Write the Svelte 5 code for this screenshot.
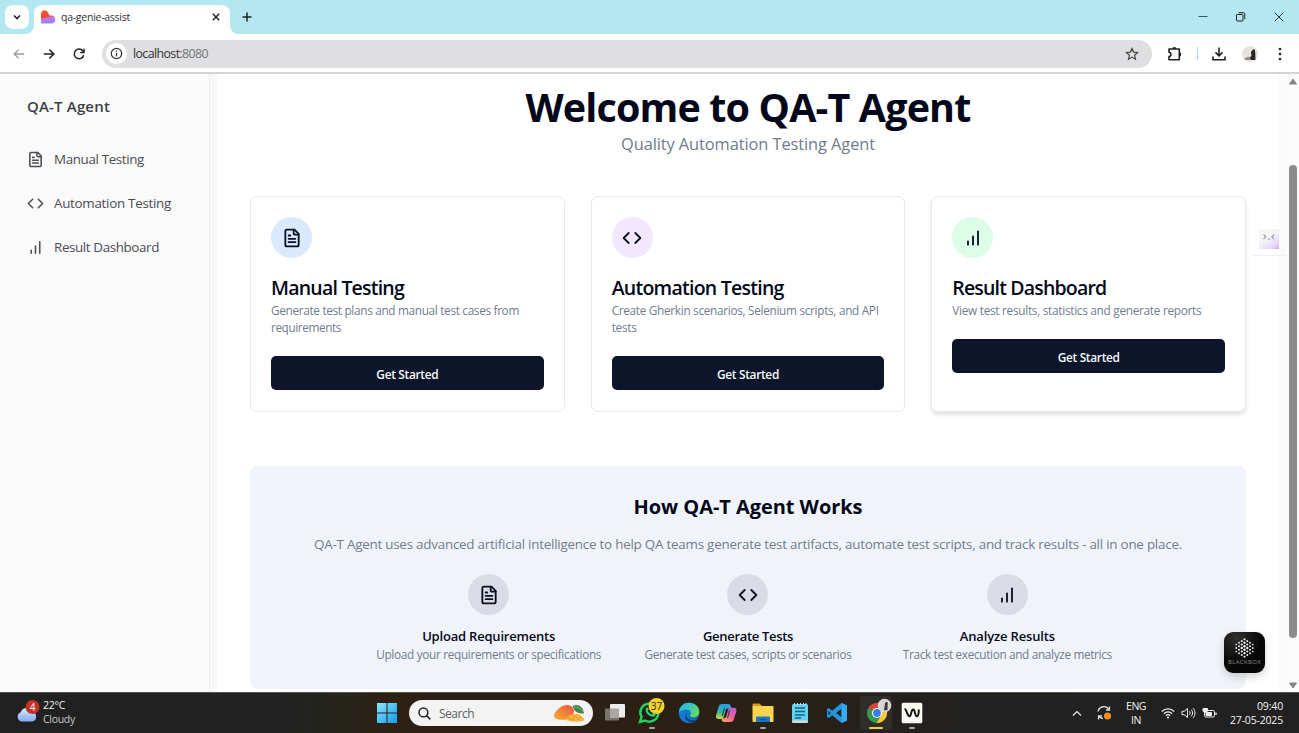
<script>
  const nav = [
    { icon: 'file', label: 'Manual Testing', w: 90 },
    { icon: 'code', label: 'Automation Testing', w: 117 },
    { icon: 'bars', label: 'Result Dashboard', w: 105 }
  ];
  const cards = [
    { icon: 'file', tint: 'blue', title: 'Manual Testing', w: 133, lines: [['Generate test plans and manual test cases from', 248], ['requirements', 70]] },
    { icon: 'code', tint: 'purple', title: 'Automation Testing', w: 172, lines: [['Create Gherkin scenarios, Selenium scripts, and API', 267], ['tests', 25]] },
    { icon: 'bars', tint: 'green', title: 'Result Dashboard', w: 154, lines: [['View test results, statistics and generate reports', 249]] }
  ];
  const steps = [
    { icon: 'file', title: 'Upload Requirements', w: 133, text: 'Upload your requirements or specifications', tw: 225 },
    { icon: 'code', title: 'Generate Tests', w: 90, text: 'Generate test cases, scripts or scenarios', tw: 207 },
    { icon: 'bars', title: 'Analyze Results', w: 95, text: 'Track test execution and analyze metrics', tw: 209 }
  ];
  const dots = [];
  for (let c = -3; c <= 3; c++) {
    const n = 6 - Math.abs(c);
    for (let r = 0; r < n; r++) {
      dots.push({ x: 20.5 + c * 2.75, y: 16 + (r - (n - 1) / 2) * 3.5, r: 1.3 - Math.abs(c) * 0.12 - Math.abs(r - (n - 1) / 2) * 0.1 });
    }
  }

  // Tracks a line of text so that it takes up the given width.
  function fit(node, width) {
    const apply = () => {
      node.style.letterSpacing = '0px';
      const natural = node.getBoundingClientRect().width;
      node.style.letterSpacing = (width - natural) / node.textContent.length + 'px';
    };
    apply();
    document.fonts?.ready.then(apply);
  }
</script>

{#snippet glyph(name, size)}
  <svg width={size} height={size} viewBox="0 0 24 24" fill="none" stroke="currentColor" stroke-width="2.2" stroke-linecap="round" stroke-linejoin="round">
    {#if name === 'file'}
      <path d="M15 2H6a2 2 0 0 0-2 2v16a2 2 0 0 0 2 2h12a2 2 0 0 0 2-2V7Z" /><path d="M14 2v4a2 2 0 0 0 2 2h4M10 9H8M16 13H8M16 17H8" />
    {:else if name === 'code'}
      <path d="m16 18 6-6-6-6M8 6l-6 6 6 6" />
    {:else}
      <path d="M12 20V10M18 20V4M6 20v-4" />
    {/if}
  </svg>
{/snippet}

<div class="screen">
  <header class="tabs">
    <div class="drop"><svg width="10" height="10" viewBox="0 0 10 10" fill="none" stroke="#222" stroke-width="1.6"><path d="M2 3.5 5 6.5 8 3.5" /></svg></div>
    <div class="tab">
      <svg width="14" height="14" viewBox="0 0 14 14">
        <defs><linearGradient id="heart" x1="0" y1="0" x2=".25" y2="1"><stop offset=".1" stop-color="#f7632a" /><stop offset=".5" stop-color="#f1423c" /><stop offset=".7" stop-color="#c77ae0" /><stop offset="1" stop-color="#8c86f8" /></linearGradient></defs>
        <path d="M0 4C0 1.500 1.500.2 3.500.2c1.700 0 2.700.8 3.600 2.500L8.500 5.500h1.700a3.900 3.900 0 0 1 0 8H1.200C.4 13.500 0 13 0 12.300Z" fill="url(#heart)" />
      </svg>
      <span class="tabname"><span class="t" use:fit={69}>qa-genie-assist</span></span>
      <svg class="close" width="8" height="8" viewBox="0 0 8 8" stroke="#222" stroke-width="1.5"><path d="m.8.8 6.4 6.4M7.2.8.8 7.2" /></svg>
    </div>
    <svg class="plus" width="10" height="10" viewBox="0 0 10 10" stroke="#222" stroke-width="1.5"><path d="M5 .5v9M.5 5h9" /></svg>
    <div class="win">
      <svg width="10" height="10" viewBox="0 0 10 10" stroke="#35565d"><path d="M.5 4.500h9" /></svg>
      <svg width="10" height="10" viewBox="0 0 10 10" fill="none" stroke="#222"><rect x=".5" y="2.500" width="6.500" height="6.500" rx=".8" /><path d="M2.500.7h5c.8 0 1.300.5 1.300 1.300V7" /></svg>
      <svg width="10" height="10" viewBox="0 0 10 10" stroke="#333"><path d="m.7.7 8.6 8.6M9.3.7.7 9.3" /></svg>
    </div>
  </header>

  <div class="toolbar">
    <svg width="12" height="12" viewBox="0 0 12 12" fill="none" stroke="#999" stroke-width="1.3"><path d="M11.2 6H1.3M5.6 1.6 1.2 6l4.4 4.4" /></svg>
    <svg width="12" height="12" viewBox="0 0 12 12" fill="none" stroke="#222" stroke-width="1.5"><path d="M.8 6h9.900M6.400 1.600 10.800 6l-4.400 4.400" /></svg>
    <svg width="12" height="12" viewBox="0 0 12 12" fill="none" stroke="#222" stroke-width="1.5"><path d="M10.700 7.200A4.800 4.800 0 1 1 9.900 3L10.800 4.200" /><path d="M11 .7v3.700H7.200" /></svg>
    <div class="omni">
      <div class="info"><svg width="13" height="13" viewBox="0 0 13 13" fill="none" stroke="#333" stroke-width="1.2"><circle cx="6.5" cy="6.5" r="5.2" /><path d="M6.500 5.800v3.600M6.500 3.400v1.400" /></svg></div>
      <span class="t url" use:fit={75}>localhost<span class="port">:8080</span></span>
      <svg class="star" width="14" height="14" viewBox="0 0 14 14" fill="none" stroke="#444" stroke-width="1.200"><path d="m7 1.400 1.600 3.700 4 .4-3 2.700.9 4L7 10.100l-3.500 2.100.9-4-3-2.700 4-.4Z" /></svg>
    </div>
    <svg class="puzzle" width="16" height="16" viewBox="0 0 16 16" fill="none" stroke="#222" stroke-width="1.600" stroke-linejoin="round"><path d="M2 3h10.300v10.700H2v-3.200c2.500-.2 2.500-4 0-4.200Z" /><path d="M6 2.600a1.500 1.500 0 0 1 2.600 0M12.600 7a1.500 1.500 0 0 1 0 2.700" fill="#222" /></svg>
    <i class="sep"></i>
    <svg class="down" width="14" height="14" viewBox="0 0 14 14" fill="none" stroke="#222" stroke-width="1.600"><path d="M7 .5v8.200M3.500 5.400 7 8.900l3.500-3.500M1 9.500v3.200h12V9.500" /></svg>
    <svg class="avatar" width="16" height="16" viewBox="0 0 16 16"><circle cx="8" cy="8" r="8" fill="#e8e3df" /><path d="M9 6.500c.6-2 2.300-3.500 3.700-3.100.6 2.400.9 6.500.7 10.600H8.800l-1-2.200 1.600-2Z" fill="#282527" /><path d="m2.500 13.500.7-1.500 4.200-1.500 1 3.500H4Z" fill="#8f8c8c" /></svg>
    <svg class="kebab" width="4" height="14" viewBox="0 0 4 14" fill="#222"><circle cx="2" cy="2" r="1.350" /><circle cx="2" cy="7" r="1.350" /><circle cx="2" cy="12" r="1.350" /></svg>
  </div>

  <div class="page">
    <aside>
      <div class="brand"><span class="t" use:fit={83}>QA-T Agent</span></div>
      {#each nav as n}
        <div class="nav">{@render glyph(n.icon, 17)}<span class="t" use:fit={n.w}>{n.label}</span></div>
      {/each}
    </aside>
    <div class="gutter"></div>
    <main>
      <h1><span class="t" use:fit={445}>Welcome to QA-T Agent</span></h1>
      <p class="sub"><span class="t" use:fit={254}>Quality Automation Testing Agent</span></p>
      <div class="cards">
        {#each cards as c, i}
          <article class:raised={i === 2}>
            <div class="disc {c.tint}">{@render glyph(c.icon, 20)}</div>
            <h3><span class="t" use:fit={c.w}>{c.title}</span></h3>
            <div class="desc">{#each c.lines as [text, w]}<div><span class="t" use:fit={w}>{text}</span></div>{/each}</div>
            <button><span class="t" use:fit={62}>Get Started</span></button>
          </article>
        {/each}
      </div>
      <section>
        <h2><span class="t" use:fit={229}>How QA-T Agent Works</span></h2>
        <p class="lead"><span class="t" use:fit={868}>QA-T Agent uses advanced artificial intelligence to help QA teams generate test artifacts, automate test scripts, and track results - all in one place.</span></p>
        <div class="steps">
          {#each steps as s}
            <div class="step">
              <div class="disc grey">{@render glyph(s.icon, 20)}</div>
              <h4><span class="t" use:fit={s.w}>{s.title}</span></h4>
              <p><span class="t" use:fit={s.tw}>{s.text}</span></p>
            </div>
          {/each}
        </div>
      </section>
    </main>
    <div class="edge"></div>
    <div class="scroll">
      <svg width="10" height="7" viewBox="0 0 10 7" fill="#858585"><path d="M5 1 8.500 6H1.500Z" stroke="#858585" stroke-linejoin="round" /></svg>
      <div class="thumb"></div>
      <svg width="10" height="7" viewBox="0 0 10 7" fill="#858585"><path d="M5 6 8.500 1H1.500Z" stroke="#858585" stroke-linejoin="round" /></svg>
    </div>
    <div class="assist"><svg width="20" height="20" viewBox="0 0 20 20" fill="none" stroke="#9a98a8" stroke-width="1.100"><path d="m4.500 5.500 2.300 2.300-2.300 2.200M15 5.500l-2.300 2.300L15 10M8.500 10h2.800" /></svg></div>
    <div class="blackbox">
      <svg width="41" height="27" viewBox="0 0 41 27" fill="#efefef">{#each dots as d}<circle cx={d.x} cy={d.y} r={d.r} />{/each}</svg>
      <span class="t" use:fit={33}>BLACKBOX</span>
    </div>
  </div>

  <footer>
    <div class="weather">
      <svg width="26" height="26" viewBox="0 0 26 26">
        <defs><linearGradient id="cloud" x1="0" y1="0" x2="0" y2="1"><stop stop-color="#d8e7ff" /><stop offset="1" stop-color="#83aaf1" /></linearGradient></defs>
        <path d="M6 21.500a5 5 0 0 1-.3-9.300 6.500 6.500 0 0 1 12-.2 4.900 4.900 0 0 1-.5 9.500Z" fill="url(#cloud)" />
        <circle cx="17.500" cy="7" r="7" fill="#c62f26" /><text x="17.500" y="10.600" text-anchor="middle" font-size="10" fill="#fff">4</text>
      </svg>
      <div class="temp"><div><span class="t" use:fit={22}>22°C</span></div><div class="dim"><span class="t" use:fit={32}>Cloudy</span></div></div>
    </div>
    <div class="apps">
      <svg width="20" height="20" viewBox="0 0 20 20"><defs><linearGradient id="win" x1="0" y1="0" x2="1" y2="1"><stop stop-color="#8be4fb" /><stop offset="1" stop-color="#139cf0" /></linearGradient></defs><path d="M0 0h9.500v9.500H0ZM10.500 0H20v9.500h-9.500ZM0 10.500h9.500V20H0ZM10.500 10.500H20V20h-9.500Z" fill="url(#win)" /></svg>
      <div class="search">
        <svg width="13" height="13" viewBox="0 0 13 13" fill="none" stroke="#222" stroke-width="1.500"><circle cx="5.400" cy="5.400" r="4.400" /><path d="m8.600 8.600 3.800 3.800" /></svg>
        <span class="t" use:fit={35}>Search</span>
        <svg class="mango" width="33" height="20" viewBox="0 0 33 20"><defs><linearGradient id="mg" x1="0" y1="1" x2="1" y2="0"><stop stop-color="#f7b22a" /><stop offset=".5" stop-color="#f0813a" /><stop offset="1" stop-color="#e8523a" /></linearGradient></defs>
          <path d="M1 12.500C1.500 9 4 7 7 4.500 11 1 18.500 1 20.500 6c1.700 4.500-1.500 10-8 10.500C8 17 .5 17 1 12.500Z" fill="url(#mg)" />
          <path d="M19.500 3.500c4-3.500 10.500-1 11.500 7-5 .3-8-1-9.500-3.500" fill="#43804a" /><path d="M21 4c4 0 7 2 9.500 5" stroke="#a9c28b" fill="none" stroke-width=".7" />
          <path d="M13 17c1-4 6-6.500 9.500-6 1.500-.5 5 .5 6 2.500 2 .5 3 2 2.500 4-5 1.800-12 1.500-18-.5Z" fill="#fbb53c" /><path d="m15 14.500 4.500 3 2-5 4 4 3-3" stroke="#e48a2c" fill="none" stroke-width=".9" />
        </svg>
      </div>
      <svg width="22" height="22" viewBox="0 0 22 22"><rect x="1" y="6.500" width="14" height="12" rx="1" fill="#77736f" /><rect x="6" y="2" width="15" height="13.500" rx="1" fill="#eee" /><path d="M6 6.500h9v9H6Z" fill="#aaa8a7" /></svg>
      <div class="app chat"><svg width="28" height="30" viewBox="0 0 28 30"><path d="m4 24 1.500-5A9 9 0 1 1 9 22.500Z" fill="#211c17" stroke="#25cf63" stroke-width="2.500" /><path d="M10 10c1-1.500 2-.6 2.700 1.300l-1 1.400c1 2 2.200 3 4.200 3.700l1.300-1.500c2 .7 3 1.300 2.500 2.200-1 2-3.400 2-5.800.8-3-1.500-5.400-4.800-3.900-7.900Z" fill="#2bd367" /><circle cx="20.500" cy="8" r="8" fill="#f5d328" /><text x="20.500" y="11.500" text-anchor="middle" font-size="10" fill="#222">37</text></svg><i></i></div>
      <svg width="22" height="22" viewBox="0 0 22 22"><defs><linearGradient id="ed" x1="0" y1="0" x2="1" y2=".5"><stop stop-color="#27b5df" /><stop offset=".5" stop-color="#31c4c9" /><stop offset="1" stop-color="#65da59" /></linearGradient><linearGradient id="ed2" x1="0" y1="0" x2="1" y2="1"><stop stop-color="#1688dd" /><stop offset="1" stop-color="#1662b5" /></linearGradient></defs><circle cx="11" cy="11" r="10.300" fill="url(#ed2)" /><path d="M1 10C1.500 4 6 .7 11 .7c6 0 10.300 4.300 10.300 9 0 4-3 5.500-6 5.500-2.500 0-3.800-1-3-2.300 1.500-2 0-5.400-3.500-5.400C5 7.500 2 9 1 10Z" fill="url(#ed)" /><path d="M8.500 11c-1.500 4 2 7.600 6.500 7.300 2-.1 3.500-.7 4.700-1.300-1 1.500-2.700 3-4.700 3.600C8 20.500 5.500 15 8.500 11Z" fill="#123f75" /></svg>
      <svg width="22" height="22" viewBox="0 0 22 22"><defs><linearGradient id="ca" x1="0" y1="0" x2="0" y2="1"><stop stop-color="#279ae9" /><stop offset=".55" stop-color="#35b7a0" /><stop offset="1" stop-color="#d8d83e" /></linearGradient><linearGradient id="cb" x1="1" y1="0" x2=".2" y2="1"><stop stop-color="#a763e8" /><stop offset=".5" stop-color="#ed5b9c" /><stop offset="1" stop-color="#f7a35f" /></linearGradient></defs><path d="M7 2h6.500c1.500 0 2 1 2.400 2.500l.6 2H13c-1.300 0-2 .6-2.400 2L8.700 15c-.4 1.300-1 2-2.400 2H3.500C1 17 .7 15 1.200 12.800L3.700 4.500C4.200 2.700 5.400 2 7 2Z" fill="url(#ca)" /><path d="M15.500 20H9c-1.500 0-2-1-2.400-2.500l-.3-1.200h2.500c1.300 0 2-.6 2.400-2l1.900-6.500c.4-1.300 1-2 2.400-2H19c2.400 0 2.700 2 2.200 4.200l-2.500 7.500c-.6 1.800-1.600 2.500-3.200 2.500Z" fill="url(#cb)" /><path d="m9.500 6-2.300 8M14.800 8l-2.300 8" stroke="#28475e" stroke-width="1.200" /></svg>
      <div class="app"><svg width="22" height="22" viewBox="0 0 22 22"><path d="M.5 3c0-1 .5-1.500 1.500-1.500h5.500L10 4H.5Z" fill="#d99a17" /><path d="M.5 4h20c.7 0 1 .4 1 1v14c0 .7-.4 1-1 1h-19c-.7 0-1-.4-1-1Z" fill="#fbd550" /><path d="M4 20v-4.200c0-1 .5-1.300 1.300-1.300h11.400c.8 0 1.300.4 1.300 1.300V20Z" fill="#1978c6" /><path d="M7.500 17.500h7" stroke="#1055a0" /></svg><i></i></div>
      <svg class="note" width="20" height="22" viewBox="0 0 20 22"><rect x="2" y="2" width="16" height="18" rx="1.500" fill="#63d0ed" /><rect x="2" y="18.500" width="16" height="2.500" rx="1" fill="#d5dad9" /><path d="M5 6h10M5 9.500h10M5 13h10M5 16h6" stroke="#12618f" stroke-width="1.500" /><path d="M4.500 1v2M7.500 1v2M10.500 1v2M13.500 1v2M16 1v2" stroke="#b6e9f3" /></svg>
      <svg width="22" height="22" viewBox="0 0 22 22"><path d="M15.500 1 21 3.500v15L15.500 21 6.200 13.200 2.800 16 1 15V7l1.800-1 3.400 2.800ZM15.500 6.700 10 11l5.500 4.300ZM2.500 8.800v4.400L4.700 11Z" fill="#2395dc" fill-rule="evenodd" /><path d="m15.500 1 5.500 2.500v15L15.500 21Z" fill="#35aaf0" /></svg>
      <div class="app active"><svg width="26" height="26" viewBox="0 0 26 26"><path d="M12 14 3.300 9A10 10 0 0 1 20.700 9Z" fill="#df4336" /><path d="M3.300 9a10 10 0 0 0 8.200 15L16 16Z" fill="#349b51" /><path d="M12 9h8.700a10 10 0 0 1-9.200 15l4.800-8Z" fill="#f7c934" /><circle cx="12" cy="14" r="5" fill="#fff" /><circle cx="12" cy="14" r="3.900" fill="#367ee9" /><circle cx="19.500" cy="6.500" r="6.800" fill="#d8d5d5" /><path d="M20 4.500c.8-1.500 2-1.800 2.700-1l-.2 7.500-3.500.4Z" fill="#37383c" /></svg><i class="on"></i></div>
      <div class="app"><svg width="22" height="22" viewBox="0 0 22 22"><rect x=".7" y=".7" width="20.600" height="20.600" rx="1.500" fill="#faf9f2" /><path d="M3.500 7c2.400 0 2.600 7.300 5 7.300 1.800 0 1.500-6.800 3.700-6.800s1.400 6.800 3.600 6.800c1.700 0 2-3 2-6.800" fill="none" stroke="#151515" stroke-width="2" /></svg><i></i></div>
    </div>
    <div class="tray">
      <svg class="up" width="10" height="7" viewBox="0 0 10 7" fill="none" stroke="#eee" stroke-width="1.200"><path d="m1 5.500 4-4 4 4" /></svg>
      <svg class="sync" width="16" height="16" viewBox="0 0 16 16" fill="none" stroke="#ddd" stroke-width="1.300"><path d="M2 6.500A6 6 0 0 1 13 4.500M13.500 1.500v3.500H10M7 13.500a6 6 0 0 1-4-2M2.500 14.500V11H6" /><circle cx="11.500" cy="11" r="3.600" fill="#f58a1f" stroke="none" /></svg>
      <div class="lang"><div><span class="t" use:fit={20}>ENG</span></div><div><span class="t" use:fit={10}>IN</span></div></div>
      <svg width="14" height="12" viewBox="0 0 14 12" fill="none" stroke="#eee" stroke-width="1.200"><path d="M.8 4.500a8.800 8.800 0 0 1 12.400 0M2.800 6.600a6 6 0 0 1 8.400 0M4.800 8.600a3.200 3.200 0 0 1 4.400 0" /><circle cx="7" cy="10.400" r="1" fill="#eee" stroke="none" /></svg>
      <svg width="15" height="12" viewBox="0 0 15 12" fill="none" stroke="#eee"><path d="M1 4.300h2.200L6.500 1.500v9L3.200 7.700H1Z" /><path d="M8.500 4.200c.8 1 .8 2.600 0 3.600M10.300 2.700c1.700 2 1.700 4.600 0 6.600M12.200 1.200c2.400 3 2.400 6.600 0 9.600" /></svg>
      <svg width="15" height="12" viewBox="0 0 15 12" fill="none" stroke="#eee"><rect x="2.500" y="3.500" width="10" height="6.500" rx="1.300" /><path d="M14 5.500V8" stroke-width="1.300" /><path d="M4 5.500h5.500v3H4Z" fill="#eee" /><path d="M1 1.500h4.500V4c0 1.500-4.500 1.500-4.500 0Z" fill="#eee" /></svg>
      <div class="clock"><div><span class="t" use:fit={26}>09:40</span></div><div><span class="t" use:fit={53}>27-05-2025</span></div></div>
    </div>
  </footer>
</div>

<style>
  :global(body) { margin: 0; overflow: hidden; }
  * { box-sizing: border-box; }
  h1, h2, h3, h4, p { margin: 0; }
  svg { display: block; flex: none; overflow: visible; }
  .t { display: inline-block; white-space: nowrap; }
  .screen { width: 1299px; height: 733px; display: flex; flex-direction: column; background: #fff; font-family: "Open Sans", "Noto Sans", sans-serif; color: #04081a; overflow: hidden; }

  .tabs { height: 34px; flex: none; background: #b3e7f1; display: flex; align-items: center; padding-left: 5px; }
  .drop { width: 24px; height: 24px; border-radius: 8px; background: #fff; display: grid; place-items: center; }
  .tab { width: 196px; height: 29px; align-self: flex-end; margin-left: 5px; background: #fff; border-radius: 8px 8px 0 0; display: flex; align-items: center; padding: 0 10px 5px 7px; font-size: 10.500px; color: #333; position: relative; }
  .tab::before, .tab::after { content: ""; position: absolute; bottom: 0; width: 8px; height: 8px; }
  .tab::before { left: -8px; background: radial-gradient(circle at 0 0, transparent 7.500px, #fff 8px); }
  .tab::after { right: -8px; background: radial-gradient(circle at 100% 0, transparent 7.500px, #fff 8px); }
  .tabname { margin-left: 6px; }
  .close { margin-left: auto; }
  .plus { margin-left: 12px; }
  .win { margin-left: auto; display: flex; gap: 28px; padding-right: 15px; }

  .toolbar { height: 40px; flex: none; display: flex; align-items: center; padding: 1px 17px 0 13px; border-bottom: 2px solid #d4d5d6; gap: 18px; background: #fff; }
  .omni { width: 1051px; height: 28px; margin-left: -1px; border-radius: 14px; background: #dfdfe1; display: flex; align-items: center; padding: 0 13px 0 4px; }
  .info { width: 21px; height: 21px; border-radius: 50%; background: #fff; display: grid; place-items: center; }
  .url { font-size: 12.400px; margin-left: 6px; color: #333; }
  .port { color: #747679; }
  .star { margin-left: auto; }
  .puzzle { margin-left: -3px; }
  .sep { width: 1px; height: 13px; background: #a3dcea; margin-left: -4px; }
  .down { margin-left: -4px; }
  .avatar { margin-left: -2px; }
  .kebab { margin-left: 2px; }

  .page { height: 618px; flex: none; display: flex; position: relative; }
  aside { width: 210px; background: #fafafa; border-right: 1px solid #ececee; padding: 19px 0 0 27px; color: #3f3f46; }
  .brand { height: 26px; line-height: 26px; font-size: 15px; font-weight: 600; margin-bottom: 18px; }
  .nav { height: 44px; display: flex; align-items: center; gap: 10px; font-size: 13.400px; color: #4c4c54; }
  .gutter { width: 7px; background: #f8f8f9; }
  main { flex: 1; padding: 13px 33px 0; display: flex; flex-direction: column; }
  h1 { height: 40px; line-height: 40px; font-size: 39.500px; font-weight: 700; text-align: center; }
  .sub { height: 24px; line-height: 24px; font-size: 16.400px; margin-top: 5px; text-align: center; color: #6f7b8c; }
  .cards { margin-top: 40px; display: grid; grid-template-columns: repeat(3, 1fr); gap: 26px; height: 216px; }
  article { border: 1px solid #e6e9ed; border-radius: 7px; padding: 20px 20px 0; background: #fff; }
  article.raised { box-shadow: 0 3px 5px -1px rgba(0, 0, 0, .16); }
  .disc { width: 41px; height: 41px; border-radius: 50%; display: grid; place-items: center; color: #0b1022; }
  .blue { background: #dbe9fe; }
  .purple { background: #f2e7fe; }
  .green { background: #dcfde7; }
  .grey { background: #d9dce4; }
  h3 { height: 20px; line-height: 20px; margin-top: 20px; font-size: 19.500px; font-weight: 600; }
  .desc { margin-top: 4px; font-size: 11.800px; line-height: 17px; color: #707c8d; }
  .desc div { height: 17px; }
  button { display: block; width: 100%; height: 34px; margin-top: 20px; border: 0; border-radius: 5px; background: #0c1529; color: #f5f8fb; font: 600 11.900px/34px "Open Sans", sans-serif; padding: 1px 0 0; }
  section { height: 223px; margin-top: 54px; border-radius: 8px; background: #f0f4fa; text-align: center; padding-top: 28px; }
  h2 { height: 26px; line-height: 26px; font-size: 20px; font-weight: 700; }
  .lead { height: 20px; line-height: 20px; margin-top: 14px; font-size: 13.400px; color: #707c8d; }
  .steps { width: 778px; margin: 20px auto 0; display: grid; grid-template-columns: repeat(3, 1fr); }
  .step { display: flex; flex-direction: column; align-items: center; }
  h4 { height: 18px; line-height: 18px; margin-top: 12px; font-size: 13px; font-weight: 600; }
  .step p { height: 17px; line-height: 17px; margin-top: 1px; font-size: 11.800px; color: #707c8d; }
  .edge { width: 8px; background: #fafafa; }
  .scroll { width: 12px; background: #fcfcfc; display: flex; flex-direction: column; align-items: center; padding: 4px 0 3px; }
  .thumb { width: 8px; height: 473px; margin: 80px 0 auto; border-radius: 4px; background: #8b8b8b; }
  .assist { position: absolute; left: 1252px; top: 145px; width: 34px; height: 37px; padding: 10px 7px; border-bottom: 1px solid #f1f1f3; }
  .assist svg { background: linear-gradient(145deg, #f3f5f7 45%, #e7d6f8 80%, #cbb0ee); }
  .blackbox { position: absolute; left: 1224px; top: 558px; width: 41px; height: 41px; border-radius: 9px; background: radial-gradient(circle at 30% 15%, #30302f, #070707 55%); box-shadow: 0 4px 9px rgba(0, 0, 0, .16); text-align: center; color: #8d8d8d; font-size: 6px; line-height: 6px; }
  .blackbox svg { height: 27px; }

  footer { height: 41px; flex: none; display: flex; position: relative; border-top: 1px solid #555; color: #f3f3f3; background: linear-gradient(90deg, #212121 22%, #25251c 26%, #2e2013 30%, #2c2015 50%, #282017 62%, #222120 72%, #212121); font-size: 10.500px; }
  .weather { display: flex; align-items: center; padding-left: 15px; width: 377px; }
  .temp { line-height: 14px; padding: 0 0 2px 2px; }
  .temp > div, .lang > div, .clock > div { height: 14px; }
  .dim { color: #c9c9c9; }
  .apps { display: flex; align-items: center; }
  .apps > * { margin-right: 15px; }
  .apps > svg:first-child { margin-right: 12px; }
  .search { width: 184px; height: 26px; border-radius: 13px; background: #f3f3f3; display: flex; align-items: center; padding: 0 7px 0 9px; color: #606060; font-size: 12px; margin-right: 11px; }
  .search .t { margin-left: 8px; }
  .mango { margin-left: auto; }
  .app { position: relative; width: 22px; height: 40px; display: grid; place-items: center; }
  .app.chat svg { margin-left: -5px; }
  .apps > .note { margin: 0 16px 0 1px; }
  .app i { position: absolute; bottom: 4px; left: 8px; width: 6px; height: 2px; border-radius: 1px; background: #a5a5a5; }
  .app i.on { left: 4px; width: 14px; background: #f4cd46; }
  .app.active { margin: 0 14px 0 2px; }
  .app.active::before { content: ""; position: absolute; inset: 3px -5px; background: #302e2b; border-radius: 3px; }
  .app.active svg { position: relative; top: -1px; }
  .tray { margin-left: auto; display: flex; align-items: center; padding-right: 16px; line-height: 14px; gap: 6px; }
  .up { margin-right: 8px; }
  .lang { text-align: center; margin: 0 9px 0 8px; }
  .clock { text-align: right; margin-left: 7px; padding-bottom: 1px; }
</style>
